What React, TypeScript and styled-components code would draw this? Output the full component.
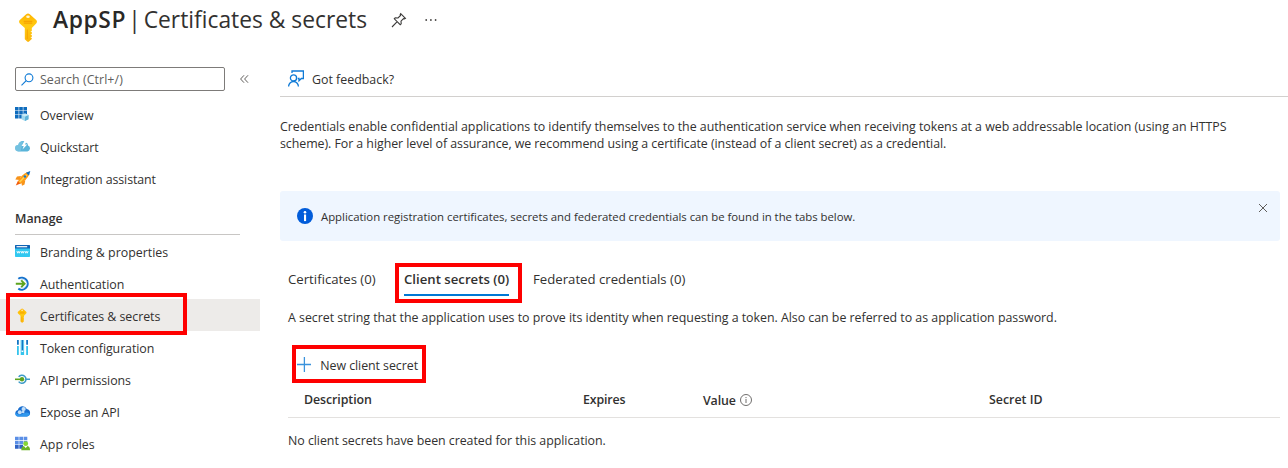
import React from 'react';
import styled, { createGlobalStyle, css } from 'styled-components';

const GlobalStyle = createGlobalStyle`
  * { box-sizing: border-box; }
  body {
    margin: 0;
    background: #fff;
    color: #323130;
    font-family: "Segoe UI", "Open Sans", "Noto Sans", sans-serif;
    font-size: 12.4px;
    overflow: hidden;
  }
`;

const Page = styled.div`
  width: 1288px;
  height: 468px;
  display: flex;
  flex-direction: column;
  overflow: hidden;
`;

const Label = styled.span<{ $track?: number }>`
  white-space: nowrap;
  letter-spacing: ${(p) => p.$track ?? 0}px;
`;

const Header = styled.header`
  height: 60px;
  display: flex;
  align-items: flex-start;
  padding-left: 19px;
`;

const HeaderKey = styled.div`
  width: 18px;
  height: 29px;
  margin-top: 13px;
`;

const Title = styled.h1`
  display: flex;
  width: 314px;
  margin: 4px 0 0 16px;
  font-size: 22.8px;
  line-height: 32px;
  font-weight: 400;
`;

const TitleName = styled(Label)`
  width: 75.500px;
  font-weight: 600;
  color: #292827;
`;

const TitleDivider = styled.span`
  width: 15.500px;
`;

const HeaderActions = styled.div`
  display: flex;
  align-items: center;
  gap: 18px;
  height: 40px;
  margin-left: 24px;
`;

const Body = styled.div`
  display: flex;
  flex: 1;
`;

const Sidebar = styled.nav`
  width: 260px;
  display: flex;
  flex-direction: column;
`;

const SearchRow = styled.div`
  display: flex;
  align-items: center;
  height: 38px;
  padding: 0 0 0 15px;
  gap: 15px;
`;

const SearchBox = styled.div`
  width: 210px;
  height: 24px;
  display: flex;
  align-items: center;
  gap: 6px;
  padding-left: 5px;
  border: 1px solid #7d7b79;
  border-radius: 2px;
  color: #605e5c;
`;

const NavItem = styled.div<{ $selected?: boolean }>`
  position: relative;
  height: 32px;
  display: flex;
  align-items: center;
  gap: 9px;
  padding: 2px 0 0 15px;
  line-height: 18px;
  ${(p) => p.$selected && css`background: #edebe9;`}
`;

const NavText = styled(Label)`
  padding-top: 2px;
`;

const NavIcon = styled.svg`
  width: 16px;
  height: 16px;
  flex: none;
`;

const NavHeading = styled.div`
  width: 225px;
  height: 33px;
  margin: 8px 0 0 15px;
  padding-top: 8px;
  border-bottom: 1px solid #c8c6c4;
  font-weight: 600;
  line-height: 18px;
`;

const Highlight = styled.div<{ $x: number; $y: number; $w: number; $h: number }>`
  position: absolute;
  left: ${(p) => p.$x}px;
  top: ${(p) => p.$y}px;
  width: ${(p) => p.$w}px;
  height: ${(p) => p.$h}px;
  border: 4px solid #fe0000;
  z-index: 2;
  pointer-events: none;
`;

const Main = styled.main`
  flex: 1;
  margin-left: 20px;
  display: flex;
  flex-direction: column;
`;

const Toolbar = styled.div`
  height: 37px;
  display: flex;
  align-items: center;
  gap: 8px;
  padding-left: 8px;
  border-bottom: 1px solid #d2d0ce;
`;

const ToolbarText = styled(Label)`
  padding-top: 2px;
`;

const Intro = styled.p`
  margin: 21px 0 0;
  display: flex;
  flex-direction: column;
  line-height: 17px;
`;

const Banner = styled.section`
  width: 1000px;
  height: 50px;
  margin-top: 39px;
  padding: 0 13px 0 17px;
  display: flex;
  align-items: center;
  gap: 8px;
  background: #eff6ff;
  border-radius: 3px;
  font-size: 11.4px;
`;

const CloseButton = styled.svg`
  width: 8px;
  height: 8px;
  margin: 0 0 16px auto;
`;

const Tabs = styled.div`
  display: flex;
  height: 35px;
  margin: 21px 0 0 8px;
  font-size: 13.2px;
`;

const Tab = styled.div<{ $w: number; $gap: number; $active?: boolean }>`
  position: relative;
  width: ${(p) => p.$w}px;
  height: 34px;
  margin-right: ${(p) => p.$gap}px;
  padding-top: 8px;
  line-height: 18px;
  font-weight: ${(p) => (p.$active ? 600 : 400)};
  border-bottom: 2px solid ${(p) => (p.$active ? '#0078d4' : 'transparent')};
`;

const Hint = styled.p`
  margin: 12px 0 0 8px;
  line-height: 18px;
`;

const Command = styled.div`
  position: relative;
  display: flex;
  align-items: center;
  align-self: flex-start;
  gap: 9px;
  height: 38px;
  margin: 18px 0 0 12px;
  padding: 1px 8px 0 4.500px;
  width: 134px;
`;

const TableHead = styled.div`
  display: grid;
  grid-template-columns: 279px 120px 286px 1fr;
  align-items: center;
  width: 992px;
  height: 35px;
  margin-left: 8px;
  padding: 0 0 2px 16px;
  border-bottom: 1px solid #e3e1df;
  font-weight: 600;
`;

const HeadCell = styled.div<{ $drop?: number }>`
  display: flex;
  align-items: center;
  gap: 4px;
  padding-top: ${(p) => p.$drop ?? 0}px;
`;

const EmptyRow = styled.div`
  margin: 14px 0 0 8px;
  line-height: 18px;
`;

const KeyShape = ({ id }: { id: string }) => (
  <>
    <defs>
      <linearGradient id={id} x1="0" y1="0" x2="0" y2="1">
        <stop offset="0" stopColor="#ffb400" />
        <stop offset="0.45" stopColor="#ffcb12" />
        <stop offset="1" stopColor="#fbb40a" />
      </linearGradient>
    </defs>
    <path
      fill={`url(#${id})`}
      d="M7.200 1.200q1.800-1.300 3.600 0l6.400 5.900q1.500 1.700 0 3.400l-4.400 4.600v10.900l-2.800 2.600q-.9.700-1.800 0L5.800 26.200V15.100L.8 10.500q-1.500-1.700 0-3.400z"
    />
    <ellipse cx="9" cy="3.700" rx="1.800" ry="1.300" fill="#fff6d0" />
    <path d="M5.200 8.400h7.600M5.200 10.100h7.600" stroke="#f7a400" strokeWidth="1.200" strokeLinecap="round" />
    <path d="M8.300 16.500v9.500" stroke="#f5a300" strokeWidth="1" />
    <path d="M13 18.500h-1.200M13 21.500h-1.200M13 24.500h-1.200" stroke="#fff" strokeWidth="1" opacity=".8" />
  </>
);

const icons: Record<string, React.ReactNode> = {
  overview: (
    <>
      <path fill="#0f6cbd" d="M0 0h3.600v3.400H0zM4.200 0h3.600v3.400H4.200zM8.400 0H12v3.400H8.400zM0 4h3.600v3.400H0zM4.200 4h3.600v3.400H4.200zM8.400 4H12v3.400H8.400zM0 8h3.600v3.400H0zM4.200 8h3.600v3.400H4.200z" />
      <path fill="#9fd8ee" d="M10 6.400l3.500 1.500v4.300L10 14l-3.500-1.800V7.900z" />
      <path fill="#5fb4d9" d="M10 9.500l3.500-1.600v4.300L10 14z" />
      <path fill="#c8ebf7" d="M10 6.400l3.500 1.500L10 9.500 6.500 7.900z" />
    </>
  ),
  quickstart: (
    <>
      <path fill="#59b4d9" d="M3.400 12.400a3.200 3.200 0 0 1-.3-6.400 4.500 4.500 0 0 1 7.700-2.600A3 3 0 0 1 13 6.600a3 3 0 0 1-.6 5.800z" />
      <path fill="#8dcde8" d="M3.400 12.400a3.200 3.200 0 0 1-.3-6.400A4.500 4.500 0 0 1 8 2.500L5.500 12.400z" opacity=".5" />
      <path fill="#fff" d="M9.500 1.800L6.600 6.900h2.100L7.500 10.600l4.700-5.200H9.900l2.300-3.600z" />
    </>
  ),
  integration: (
    <>
      <path fill="#f25c0c" d="M.8 14.500l2.300-5 2.900 2.700z" />
      <path fill="#f7931a" d="M6 5L2 5.400.3 8.400l4.500.6zM10.300 9.500l-.8 4-2.500 1.200-.9-4z" />
      <path fill="#ff9a16" d="M3 10.500Q6.400 3.500 12 1.200l2.300 2.300Q11.800 9 5.500 12.700z" />
      <path fill="#ffd24a" d="M4 10.800l7-7.800 1.200 1.300-7 7.300z" />
      <path fill="#0f6cbd" d="M11 1.700L15.300 0 14 4.600z" />
      <circle cx="9.900" cy="5.500" r="1.200" fill="#1677c7" />
    </>
  ),
  branding: (
    <>
      <path fill="#32c8f0" d="M0 1.600h15v10.700a.8.8 0 0 1-.8.800H.8A.8.8 0 0 1 0 12.300z" />
      <path fill="#0f62b4" d="M.8 1h13.400a.8.8 0 0 1 .8.800v2.600H0V1.800A.8.8 0 0 1 .8 1z" />
      <path fill="#fff" d="M1.500 2.100h10.700v1.200H1.500z" />
      <path fill="none" stroke="#fff" strokeWidth=".85" d="M1.900 7l.8 2.200.8-1.800.8 1.800.8-2.200M5.900 7l.8 2.200.8-1.800.8 1.800.8-2.200M9.900 7l.8 2.200.8-1.800.8 1.800.8-2.200" />
    </>
  ),
  authentication: (
    <>
      <path fill="none" stroke="#1672cc" strokeWidth="2" d="M3.300 2.800A6 6 0 1 1 3.300 12.600" />
      <path fill="none" stroke="#5ea9e8" strokeWidth=".8" d="M5.300 4.300A4.200 4.200 0 1 1 5.300 11.100" opacity=".5" />
      <path fill="none" stroke="#5da41e" strokeWidth="1.900" d="M.8 7.700h8.700M6.200 4.300l3.400 3.400-3.400 3.400" />
    </>
  ),
  certificates: (
    <g transform="translate(2.600 .3) scale(.5)">
      <KeyShape id="navKey" />
    </g>
  ),
  token: (
    <>
      <path fill="#1275c4" d="M2 0h1.800v4.800H2zM6.500 0h1.800v10.600H6.500zM11.200 0H13v4.800h-1.800z" />
      <path fill="#35c4ed" d="M2 6h1.800v9H2zM5.700 0h.8v15h-.8zM8.300 0h.8v15h-.8zM6.500 12h1.800v3H6.500zM11.200 6H13v9h-1.800z" />
    </>
  ),
  permissions: (
    <>
      <path fill="none" stroke="#3c9bc7" strokeWidth="1.600" d="M3.700 4.900a4 4 0 1 1 0 4.700M11.500 7.300h3.500" />
      <path stroke="#5da41e" strokeWidth="1.600" d="M0 7.300h6" />
      <circle cx="7" cy="7.300" r="2.200" fill="#5da41e" />
    </>
  ),
  expose: (
    <>
      <path fill="#1a6fd0" d="M3.400 12.600a3.300 3.300 0 0 1-.5-6.500 4.700 4.700 0 0 1 8.900-1A3.800 3.800 0 0 1 12 12.600z" />
      <path fill="#2f98ee" d="M3.400 12.600a3.300 3.300 0 0 1-3-3.800q4 2.800 8.200.7t6.300.6A3.700 3.700 0 0 1 12 12.600z" />
      <g fill="#c3dff8">
        <circle cx="4.800" cy="8.300" r="2" />
        <circle cx="8.600" cy="5" r="2.100" />
        <circle cx="8.200" cy="7.900" r="1.300" />
      </g>
    </>
  ),
  roles: (
    <g transform="translate(0 .7)">
      <path fill="#5b8fe6" d="M0 0h3.700v3.600H0zM4.300 0H8v3.600H4.300zM8.600 0h3.700v3.600H8.600zM0 4.200h3.700v3.600H0zM4.300 4.200H8v3.600H4.300zM8.600 4.200h3.700v3.600H8.600z" />
      <path fill="#2f62c4" d="M0 8.400h3.700V12H0zM4.300 8.400H8V12H4.300z" />
      <circle cx="10.700" cy="7" r="2.400" fill="#86d633" />
      <path fill="#6bb325" d="M6.300 13.600q0-4 2.600-4.400l1.800 2 1.800-2q2.500.4 2.500 4.400z" />
    </g>
  ),
};

type Entry = { icon: string; text: string; track?: number; selected?: boolean };

const topItems: Entry[] = [
  { icon: 'overview', text: 'Overview', track: -0.03 },
  { icon: 'quickstart', text: 'Quickstart', track: -0.1 },
  { icon: 'integration', text: 'Integration assistant', track: -0.1 },
];

const manageItems: Entry[] = [
  { icon: 'branding', text: 'Branding & properties' },
  { icon: 'authentication', text: 'Authentication', track: -0.05 },
  { icon: 'certificates', text: 'Certificates & secrets', track: -0.05, selected: true },
  { icon: 'token', text: 'Token configuration', track: -0.08 },
  { icon: 'permissions', text: 'API permissions', track: -0.08 },
  { icon: 'expose', text: 'Expose an API', track: -0.08 },
  { icon: 'roles', text: 'App roles' },
];

const NavEntry = ({ icon, text, track, selected }: Entry) => (
  <NavItem $selected={selected}>
    <NavIcon viewBox="0 0 16 16">{icons[icon]}</NavIcon>
    <NavText $track={track}>{text}</NavText>
    {selected && <Highlight $x={6} $y={-6} $w={181} $h={42} />}
  </NavItem>
);

export default function App() {
  return (
    <Page>
      <GlobalStyle />
      <Header>
        <HeaderKey>
          <svg width="18" height="29" viewBox="0 0 18 29"><KeyShape id="headerKey" /></svg>
        </HeaderKey>
        <Title>
          <TitleName $track={0.6}>AppSP</TitleName>
          <TitleDivider>|</TitleDivider>
          <Label>Certificates &amp; secrets</Label>
        </Title>
        <HeaderActions>
          <svg width="16" height="16" viewBox="0 0 16 16" fill="none" stroke="#3b3a39" strokeWidth="1.100">
            <path d="M9.700 1.600l4.700 4.700-1.100.5-.8-.2-2.500 2.500.2 2.700-1 .9L3.300 6.800l.9-1 2.800.2 2.500-2.500-.3-.9zM6.200 9.700L1 15" />
          </svg>
          <svg width="12" height="4" viewBox="0 0 12 4" fill="#484644">
            <circle cx="1.200" cy="2" r=".9" /><circle cx="5.900" cy="2" r=".9" /><circle cx="10.600" cy="2" r=".9" />
          </svg>
        </HeaderActions>
      </Header>
      <Body>
        <Sidebar>
          <SearchRow>
            <SearchBox>
              <svg width="13" height="13" viewBox="0 0 13 13" fill="none" stroke="#0f7ad6" strokeWidth="1.100">
                <circle cx="8" cy="4.800" r="3.900" /><path d="M5.200 7.700L.5 12.400" />
              </svg>
              <Label $track={0.07}>Search (Ctrl+/)</Label>
            </SearchBox>
            <svg width="9" height="8" viewBox="0 0 9 8" fill="none" stroke="#605e5c">
              <path d="M4 .3L.6 4 4 7.700M8 .3L4.600 4 8 7.700" />
            </svg>
          </SearchRow>
          {topItems.map((item) => <NavEntry key={item.text} {...item} />)}
          <NavHeading><Label>Manage</Label></NavHeading>
          {manageItems.map((item) => <NavEntry key={item.text} {...item} />)}
        </Sidebar>
        <Main>
          <Toolbar>
            <svg width="16" height="17" viewBox="0 0 16 17" fill="none" stroke="#0f7ad6" strokeWidth="1.300">
              <path d="M4 3V1h11.400v7.500h-2L11 10.800V8.500H9.700" />
              <circle cx="5.500" cy="7.900" r="3.100" />
              <path d="M.6 16.500a4.900 5 0 0 1 9.800 0" />
            </svg>
            <ToolbarText>Got feedback?</ToolbarText>
          </Toolbar>
          <Intro>
            <Label $track={-0.036}>Credentials enable confidential applications to identify themselves to the authentication service when receiving tokens at a web addressable location (using an HTTPS</Label>
            <Label $track={-0.055}>scheme). For a higher level of assurance, we recommend using a certificate (instead of a client secret) as a credential.</Label>
          </Intro>
          <Banner>
            <svg width="16" height="16" viewBox="0 0 16 16">
              <circle cx="8" cy="8" r="8" fill="#015cda" />
              <circle cx="8" cy="4.200" r="1.300" fill="#fff" />
              <path fill="#fff" d="M7 6.500h2.100v6.600H7z" />
            </svg>
            <Label $track={-0.03}>Application registration certificates, secrets and federated credentials can be found in the tabs below.</Label>
            <CloseButton viewBox="0 0 8 8" fill="none" stroke="#605e5c" strokeWidth="1">
              <path d="M0 0l8 8M8 0L0 8" />
            </CloseButton>
          </Banner>
          <Tabs>
            <Tab $w={88} $gap={28}><Label>Certificates (0)</Label></Tab>
            <Tab $w={105} $gap={24} $active>
              <Label>Client secrets (0)</Label>
              <Highlight $x={-9} $y={1} $w={127} $h={40} />
            </Tab>
            <Tab $w={153} $gap={0}><Label>Federated credentials (0)</Label></Tab>
          </Tabs>
          <Hint><Label $track={-0.027}>A secret string that the application uses to prove its identity when requesting a token. Also can be referred to as application password.</Label></Hint>
          <Command>
            <svg width="15" height="15" viewBox="0 0 15 15" stroke="#3a92dc" strokeWidth="1.300">
              <path d="M0 7.500h15M7.500 0v15" />
            </svg>
            <ToolbarText $track={-0.06}>New client secret</ToolbarText>
            <Highlight $x={0} $y={0} $w={134} $h={38} />
          </Command>
          <TableHead>
            <HeadCell><Label $track={-0.08}>Description</Label></HeadCell>
            <HeadCell><Label $track={-0.15}>Expires</Label></HeadCell>
            <HeadCell $drop={2}>
              <Label $track={-0.1}>Value</Label>
              <svg width="12" height="12" viewBox="0 0 12 12" fill="none" stroke="#605e5c" strokeWidth=".9">
                <circle cx="6" cy="6" r="5.500" /><path d="M6 5v4M6 3v1.100" />
              </svg>
            </HeadCell>
            <HeadCell><Label>Secret ID</Label></HeadCell>
          </TableHead>
          <EmptyRow><Label $track={-0.04}>No client secrets have been created for this application.</Label></EmptyRow>
        </Main>
      </Body>
    </Page>
  );
}
